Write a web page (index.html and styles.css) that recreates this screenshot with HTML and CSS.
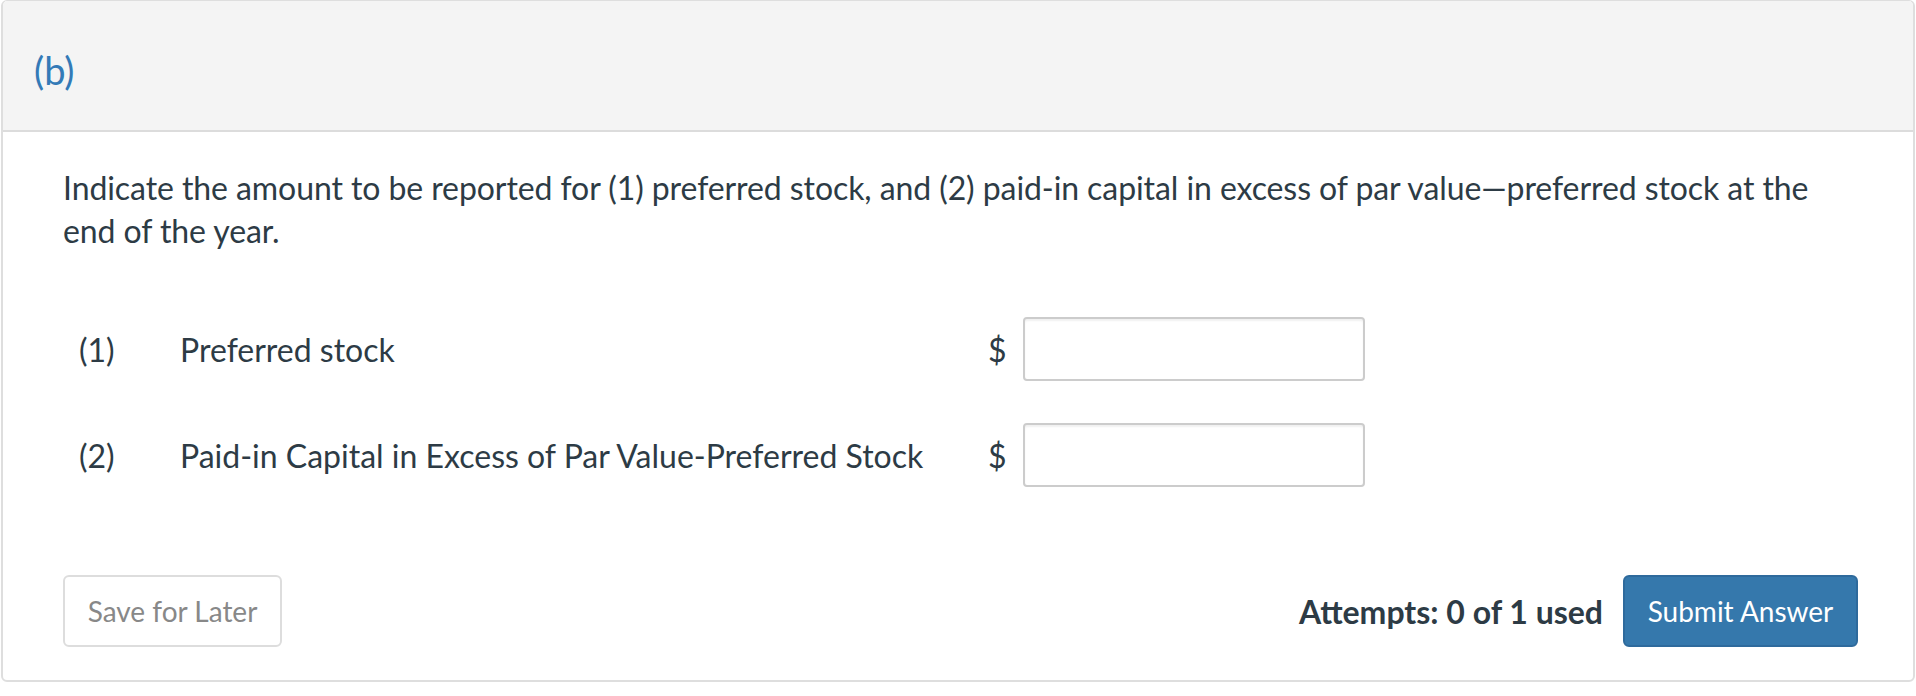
FILE: index.html
```html
<!DOCTYPE html>
<html lang="en">
<head>
<meta charset="utf-8">
<title>Part (b)</title>
<link rel="stylesheet" href="styles.css">
</head>
<body>
<div class="card">
  <div class="card-header">
    <h2 class="part-title">(b)</h2>
  </div>
  <div class="card-body">
    <p class="question">Indicate the amount to be reported for (1) preferred stock, and (2) paid-in capital in excess of par value—preferred stock at the end of the year.</p>
    <div class="answers">
      <div class="answer-row">
        <span class="num">(1)</span>
        <span class="label">Preferred stock</span>
        <span class="currency">$</span>
        <input class="amount" type="text" aria-label="Preferred stock">
      </div>
      <div class="answer-row">
        <span class="num">(2)</span>
        <span class="label">Paid-in Capital in Excess of Par Value-Preferred Stock</span>
        <span class="currency">$</span>
        <input class="amount" type="text" aria-label="Paid-in Capital in Excess of Par Value-Preferred Stock">
      </div>
    </div>
    <div class="footer">
      <button class="btn btn-save" type="button">Save for Later</button>
      <div class="submit-group">
        <span class="attempts">Attempts: 0 of 1 used</span>
        <button class="btn btn-submit" type="button">Submit Answer</button>
      </div>
    </div>
  </div>
</div>
</body>
</html>
```
FILE: styles.css
```css
html, body {
  margin: 0;
  padding: 0;
  background: #ffffff;
}

body {
  font-family: Lato, "Open Sans", "Liberation Sans", sans-serif;
  color: #2d3b45;
}

.card {
  box-sizing: border-box;
  width: 1914px;
  margin-left: 1px;
  border: 2px solid #dedede;
  border-top-width: 1px;
  border-radius: 6px;
  overflow: hidden;
  background: #ffffff;
}

.card-header {
  height: 131px;
  background: #f4f4f4;
  border-bottom: 2px solid #dcdcdc;
  display: flex;
  align-items: center;
  padding-left: 31px;
  box-sizing: border-box;
}

.part-title {
  margin: 0;
  font-size: 38px;
  font-weight: 400;
  color: #337ab7;
  line-height: 1;
  padding-top: 8px;
}

.card-body {
  padding: 34px 55px 33px 60px;
}

.question {
  margin: 0;
  font-size: 32px;
  line-height: 43px;
  letter-spacing: -0.08px;
  max-width: 1760px;
}

.answers {
  margin-top: 65px;
  padding-left: 16px;
  display: flex;
  flex-direction: column;
  gap: 42px;
}

.answer-row {
  display: flex;
  align-items: center;
  height: 64px;
  font-size: 32px;
}

.num {
  width: 101px;
  flex: none;
}

.label {
  width: 808px;
  flex: none;
}

.currency {
  width: 15px;
  flex: none;
  margin-right: 20px;
}

.amount {
  box-sizing: border-box;
  width: 342px;
  height: 64px;
  border: 2px solid #cccccc;
  border-radius: 4px;
  box-shadow: inset 0 2px 2px rgba(0, 0, 0, 0.06);
  font-family: inherit;
  font-size: 26px;
  padding: 0 12px;
  background: #ffffff;
}

.footer {
  margin-top: 88px;
  display: flex;
  justify-content: space-between;
  align-items: center;
}

.submit-group {
  display: flex;
  align-items: center;
  gap: 20px;
}

.attempts {
  font-size: 32px;
  font-weight: 700;
  color: #2d3b45;
}

.btn {
  box-sizing: border-box;
  height: 72px;
  border-radius: 6px;
  font-family: inherit;
  font-size: 28px;
  cursor: pointer;
}

.btn-save {
  width: 219px;
  background: #ffffff;
  border: 2px solid #dddddd;
  color: #888888;
}

.btn-submit {
  width: 235px;
  background: #3578ac;
  border: 2px solid #2e6a9c;
  color: #ffffff;
}
```
